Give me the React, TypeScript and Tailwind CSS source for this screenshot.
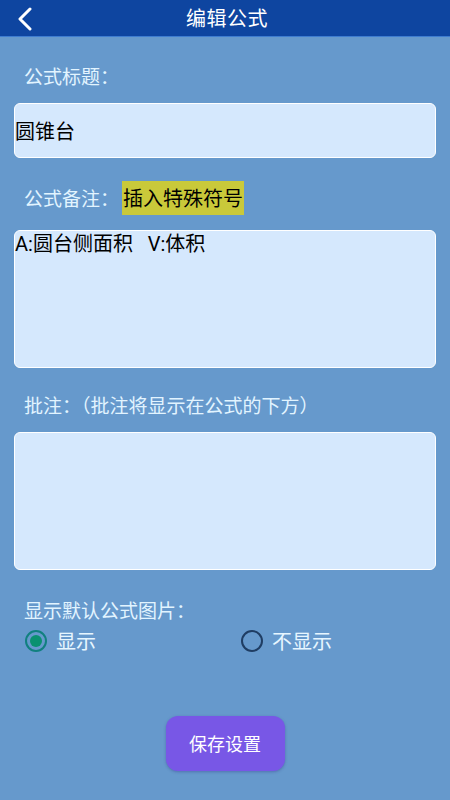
import { useState } from "react";

const font = { fontFamily: '"Noto Sans CJK SC", "Noto Sans", sans-serif' };
const mixed = { fontFamily: 'Roboto, "Noto Sans CJK SC", sans-serif' };

function Radio({ checked, label, onClick }: { checked: boolean; label: string; onClick: () => void }) {
  return (
    <button type="button" onClick={onClick} className="flex items-center gap-[9px]">
      <span
        className={`w-[22px] h-[22px] rounded-full border-[2px] flex items-center justify-center ${
          checked ? "border-[#11807f]" : "border-[#1f3d63]"
        }`}
      >
        {checked && <span className="w-[12px] h-[12px] rounded-full bg-[#0a9170]" />}
      </span>
      <span className="text-[20px] text-[#e6f6ff]">{label}</span>
    </button>
  );
}

export default function App() {
  const [show, setShow] = useState(true);

  return (
    <div className="w-[450px] h-[800px] bg-[#6699cc] flex flex-col" style={font}>
      <div className="h-[37px] bg-[#0e45a0] border-b border-[#3e7cd0] relative flex items-center justify-center shrink-0">
        <svg className="absolute left-[16px] top-[7px]" width="18" height="24" viewBox="0 0 18 24">
          <path d="M14 2 L4 12 L14 22" fill="none" stroke="white" strokeWidth="3" strokeLinecap="round" strokeLinejoin="round" />
        </svg>
        <span className="text-white text-[20px] tracking-[0.5px] ml-[4px]">编辑公式</span>
      </div>

      <div className="px-[14px] flex flex-col">
        <div className="pl-[10px] pt-[24px] text-[19px] text-[#e2f4ff] leading-[30px]">公式标题：</div>
        <div className="mt-[12px] h-[55px] bg-[#d5e8fd] border border-white rounded-[6px] flex items-center text-[20px] text-black">
          圆锥台
        </div>

        <div className="pl-[10px] mt-[23px] flex items-center text-[19px] text-[#e2f4ff] h-[34px]">
          公式备注：
          <span className="ml-[3px] bg-[#c9c93a] text-black text-[20px] px-[1px] h-[34px] flex items-center">插入特殊符号</span>
        </div>
        <div
          className="mt-[15px] h-[138px] bg-[#d5e8fd] border border-white rounded-[6px] text-[20px] text-black leading-[26px]"
          style={mixed}
        >
          A:圆台侧面积&nbsp;&nbsp;&nbsp;V:体积
        </div>

        <div className="pl-[10px] mt-[22px] text-[19px] text-[#e2f4ff] leading-[30px]">批注：（批注将显示在公式的下方）</div>
        <div className="mt-[12px] h-[138px] bg-[#d5e8fd] border border-white rounded-[6px]" />

        <div className="pl-[10px] mt-[25px] text-[19px] text-[#e2f4ff] leading-[30px]">显示默认公式图片：</div>
        <div className="pl-[11px] mt-[1px] flex items-center">
          <div className="w-[216px]">
            <Radio checked={show} label="显示" onClick={() => setShow(true)} />
          </div>
          <Radio checked={!show} label="不显示" onClick={() => setShow(false)} />
        </div>

        <div className="mt-[60px] flex justify-center">
          <button
            type="button"
            className="w-[119px] h-[55px] rounded-[12px] bg-[#7857e6] text-white text-[18px] shadow-[0_1px_3px_rgba(40,40,120,0.35)]"
          >
            保存设置
          </button>
        </div>
      </div>
    </div>
  );
}
